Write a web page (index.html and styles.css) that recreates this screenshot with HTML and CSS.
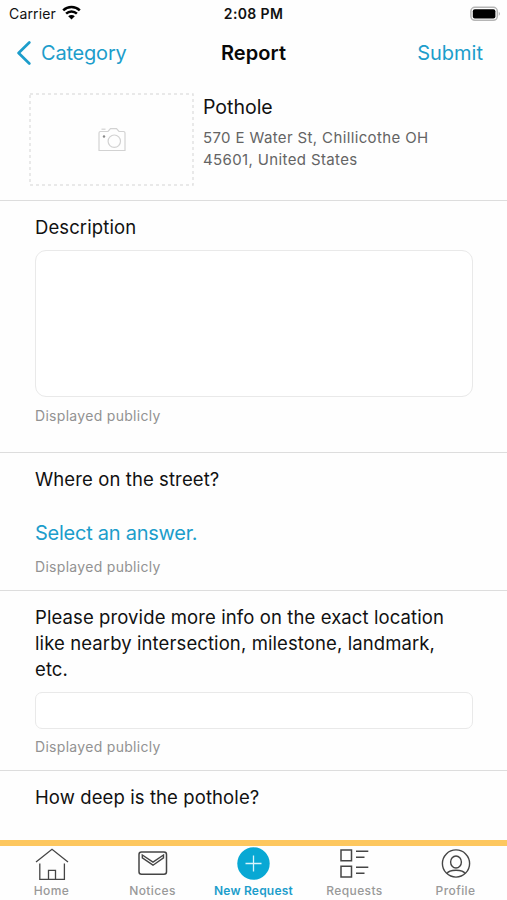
FILE: index.html
```html
<!DOCTYPE html>
<html lang="en">
<head>
<meta charset="utf-8">
<title>Report</title>
<link rel="stylesheet" href="styles.css">
</head>
<body>
<div class="app">
  <div class="status">
    <div class="carrier"><span>Carrier</span>
      <svg width="19" height="15" viewBox="0 0 19 15" fill="none" stroke="#000" stroke-width="2.5"><path d="M1.2 5.3a12 12 0 0 1 16.6 0M4.1 8.6a7.7 7.7 0 0 1 10.8 0"/><path d="M9.5 14.6 6.2 11.3a4.6 4.6 0 0 1 6.6 0z" fill="#000" stroke="none"/></svg>
    </div>
    <div class="time">2:08 PM</div>
    <div class="battery">
      <svg width="32" height="16" viewBox="0 0 32 16"><rect x="1.9" y="1.3" width="26.4" height="13" rx="4" fill="#fff" stroke="#b5b5b5" stroke-width="1.5"/><rect x="3.8" y="3.2" width="22.6" height="9.3" rx="2" fill="#000"/><path d="M29.8 5.7q2.2 1.9 0 4.2z" fill="#aaa"/></svg>
    </div>
  </div>
  <header class="nav">
    <a class="back"><svg width="15" height="26" viewBox="0 0 15 26" fill="none" stroke="#1c9dcb" stroke-width="2.7" stroke-linecap="round" stroke-linejoin="round"><path d="M13.3 2.5 2.6 13l10.7 10.5"/></svg><span>Category</span></a>
    <h1>Report</h1>
    <a class="submit">Submit</a>
  </header>
  <main>
    <section class="summary">
      <div class="photo">
        <svg class="frame" width="165" height="93"><rect x="1" y="1" width="163" height="91" fill="none" stroke="#e2e2e2" stroke-width="1.5" stroke-dasharray="3 3"/></svg>
        <svg width="28" height="26" viewBox="0 0 28 26" fill="none" stroke="#d2d2d2" stroke-width="1.2"><path d="M2.5 4.5H10L12.5 1.7h6L21 4.5h4.5q1.5 0 1.5 1.5v17.5H1V6q0-1.5 1.5-1.5z"/><circle cx="16.3" cy="14.2" r="6.2"/><path d="M3.5 2.2h4"/><circle cx="6" cy="9.5" r="1.2" fill="#888" stroke="none"/></svg>
      </div>
      <div class="place">
        <h2>Pothole</h2>
        <p>570 E Water St, Chillicothe OH<br>45601, United States</p>
      </div>
    </section>
    <section class="field description">
      <h3>Description</h3>
      <div class="input large"></div>
      <p class="note">Displayed publicly</p>
    </section>
    <section class="field where">
      <h3>Where on the street?</h3>
      <a class="select">Select an answer.</a>
      <p class="note">Displayed publicly</p>
    </section>
    <section class="field location">
      <h3>Please provide more info on the exact location<br>like nearby intersection, milestone, landmark,<br>etc.</h3>
      <div class="input"></div>
      <p class="note">Displayed publicly</p>
    </section>
    <section class="field depth">
      <h3>How deep is the pothole?</h3>
    </section>
  </main>
  <footer class="tabs">
    <a class="tab"><svg width="34" height="34" viewBox="0 0 34 34" fill="none" stroke="#454545" stroke-width="1.3"><path d="M1 15 17 2.3 33 15M4.8 16.5V32.3h24.6V16.5M13.5 32.3v-9h7v9"/></svg><span>Home</span></a>
    <a class="tab"><svg width="34" height="34" viewBox="0 0 34 34" fill="none" stroke="#454545" stroke-width="1.5"><rect x="3" y="5" width="27.5" height="22.3" rx="2.5"/><path d="M6.3 8v2.8L17 18.2l10.5-7.4V8L17 15.2z" stroke-width="1.4"/></svg><span>Notices</span></a>
    <a class="tab active"><svg width="34" height="34" viewBox="0 0 34 34"><circle cx="16.5" cy="16.5" r="16.2" fill="#08a8d4"/><path d="M8.5 16.5h16M16.5 8.5v16" stroke="#d8f4fc" stroke-width="1.3"/></svg><span>New Request</span></a>
    <a class="tab"><svg width="34" height="34" viewBox="0 0 34 34" fill="none" stroke="#454545" stroke-width="1.5"><path d="M3 3h10.5v10.7H3zM3 19.3h10.5V30H3zM18 4.3h12.3M18 10.3h8.5M18 20.3h12.3M18 26.3h8.5"/></svg><span>Requests</span></a>
    <a class="tab"><svg width="34" height="34" viewBox="0 0 34 34" fill="none" stroke="#454545" stroke-width="1.4"><circle cx="17" cy="16.5" r="13.6"/><ellipse cx="17" cy="15" rx="5.4" ry="6"/><path d="M8 26.5c1-2.1 4.5-3.3 9-3.3s8 1.2 9 3.3"/></svg><span>Profile</span></a>
  </footer>
</div>
</body>
</html>
```
FILE: styles.css
```css
* { box-sizing: border-box; margin: 0; padding: 0; }
body { background: #fff; font-family: Inter, "Liberation Sans", sans-serif; color: #111; }
svg { display: block; flex: none; }
h1, h2, h3 { font-weight: 400; }
.app { width: 507px; height: 900px; display: flex; flex-direction: column; overflow: hidden; background: #fefefe; }
.status, .nav { display: grid; grid-template-columns: 1fr auto 1fr; align-items: center; flex: none; }
.status { height: 27px; padding: 0 6px; font-size: 14px; }
.carrier { display: flex; align-items: center; gap: 6px; padding-left: 3px; letter-spacing: .15px; }
.carrier svg { margin-top: -2px; }
.time { font-weight: 600; letter-spacing: .35px; }
.battery { justify-self: end; }
.nav { height: 51px; padding: 0 16px; font-size: 20px; }
.nav h1 { font-size: 20px; font-weight: 600; color: #080808; letter-spacing: .1px; }
.back { display: flex; align-items: center; gap: 10px; letter-spacing: -.2px; }
.back, .submit, .select { color: #1c9dcb; }
.submit { justify-self: end; padding-right: 8px; }
main { flex: 1; min-height: 0; overflow: hidden; }
.summary { height: 123px; padding: 15px 29px; display: flex; gap: 9px; border-bottom: 1px solid #ddd; }
.photo { width: 165px; height: 93px; display: grid; place-items: center; }
.photo svg { grid-area: 1 / 1; }
.place { padding-top: 1px; }
.place h2 { font-size: 19.5px; line-height: 26px; margin-bottom: 7px; }
.place p { font-size: 15px; line-height: 22px; color: #646464; white-space: nowrap; letter-spacing: .37px; }
.field { padding: 13px 34px 0 35px; border-bottom: 1px solid #ddd; }
.field h3 { font-size: 18.5px; line-height: 26px; white-space: nowrap; letter-spacing: .1px; }
.input { height: 37px; border: 1px solid #e9e9e9; border-radius: 7px; background: #fff; margin-top: 10px; }
.input.large { height: 147px; border-radius: 11px; }
.note { font-size: 14px; line-height: 20px; color: #929292; margin-top: 9px; letter-spacing: .3px; }
.description { height: 252px; }
.where { height: 138px; }
.select { display: block; font-size: 20px; line-height: 26px; margin-top: 28px; letter-spacing: -.25px; }
.where .note { margin-top: 11px; }
.location { height: 180px; }
.location .note { margin-top: 8px; }
.depth { border: 0; }
.tabs { height: 60px; flex: none; border-top: 6px solid #fdc75f; display: grid; grid-template-columns: repeat(5, 101px); justify-content: center; }
.tab { display: flex; flex-direction: column; align-items: center; padding-top: 1px; font-size: 12px; line-height: 16px; font-weight: 500; letter-spacing: .4px; color: #999; }
.tab span { margin-top: 2px; white-space: nowrap; }
.tab.active { color: #1c9dcb; font-weight: 600; letter-spacing: .2px; }
```
